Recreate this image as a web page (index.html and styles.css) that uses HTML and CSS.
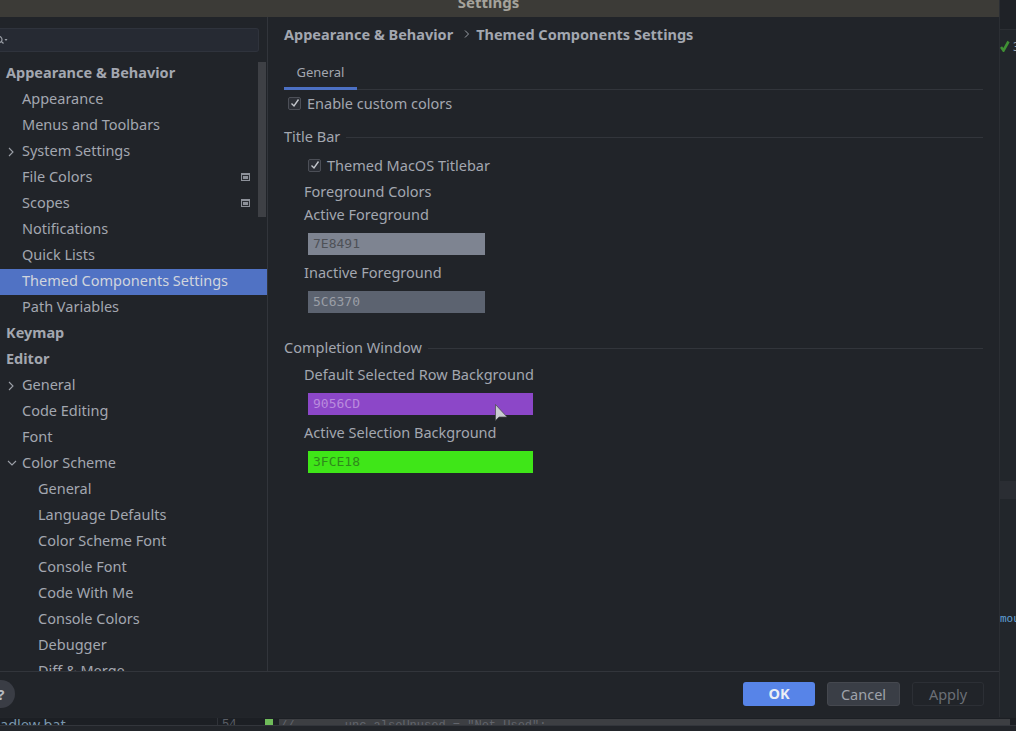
FILE: index.html
```html
<!DOCTYPE html>
<html lang="en">
<head>
<meta charset="UTF-8">
<meta name="viewport" content="width=device-width, initial-scale=1.0">
<title>Settings</title>
<link rel="stylesheet" href="styles.css">
</head>
<body>
<div class="screen">
<div class="upper">
<div class="dialog">
<div class="titlebar"><span>Settings</span></div>
<div class="dialog-body">
<div class="sidebar">
<div class="search">
<svg class="search-icon" width="10" height="10" viewBox="0 0 10 10"><path d="M-1 1.5 A3 3 0 1 1 -1 7.5 M1.500 6.500 L3.500 8.500" fill="none" stroke="#9a9ea6" stroke-width="1.2"/><path d="M4.500 4h3l-1.500 2z" fill="#9a9ea6"/></svg>
</div>
<div class="tree-wrap">
<div class="tree">
<div class="row head">Appearance &amp; Behavior</div>
<div class="row lvl1">Appearance</div>
<div class="row lvl1">Menus and Toolbars</div>
<div class="row lvl1"><svg class="arrow" width="8" height="10" viewBox="0 0 8 10"><path d="M2 1l4 4-4 4" fill="none" stroke="#9ca0a8" stroke-width="1.1"/></svg>System Settings</div>
<div class="row lvl1">File Colors<svg class="proj" width="10" height="9" viewBox="0 0 10 9"><path d="M0 0h9v8H0z" fill="#8d9199"/><path d="M1 2h7v5H1z" fill="#2b2e33"/><path d="M2 3h5v3H2z" fill="#8d9199"/></svg></div>
<div class="row lvl1">Scopes<svg class="proj" width="10" height="9" viewBox="0 0 10 9"><path d="M0 0h9v8H0z" fill="#8d9199"/><path d="M1 2h7v5H1z" fill="#2b2e33"/><path d="M2 3h5v3H2z" fill="#8d9199"/></svg></div>
<div class="row lvl1">Notifications</div>
<div class="row lvl1">Quick Lists</div>
<div class="row lvl1 selected">Themed Components Settings</div>
<div class="row lvl1">Path Variables</div>
<div class="row head">Keymap</div>
<div class="row head">Editor</div>
<div class="row lvl1"><svg class="arrow" width="8" height="10" viewBox="0 0 8 10"><path d="M2 1l4 4-4 4" fill="none" stroke="#9ca0a8" stroke-width="1.1"/></svg>General</div>
<div class="row lvl1">Code Editing</div>
<div class="row lvl1">Font</div>
<div class="row lvl1"><svg class="arrow" width="10" height="8" viewBox="0 0 10 8"><path d="M1 2l4 4 4-4" fill="none" stroke="#9ca0a8" stroke-width="1.1"/></svg>Color Scheme</div>
<div class="row lvl2">General</div>
<div class="row lvl2">Language Defaults</div>
<div class="row lvl2">Color Scheme Font</div>
<div class="row lvl2">Console Font</div>
<div class="row lvl2">Code With Me</div>
<div class="row lvl2">Console Colors</div>
<div class="row lvl2">Debugger</div>
<div class="row lvl2">Diff &amp; Merge</div>
</div>
<div class="scrollbar"></div>
</div>
</div>
<div class="content">
<div class="crumbs"><span>Appearance &amp; Behavior</span><svg width="6" height="8" viewBox="0 0 6 8"><path d="M1 0.500l3.500 3.500-3.500 3.500" fill="none" stroke="#9ca0a8"/></svg><span>Themed Components Settings</span></div>
<div class="tabs"><div class="tab">General</div></div>
<div class="check-row top"><span class="check"><svg width="10" height="10" viewBox="0 0 10 10"><path d="M1.500 5.500l2.500 2.500 4.500-6.500" fill="none" stroke="#c3c6cc" stroke-width="1.4"/></svg></span>Enable custom colors</div>
<div class="group-title first"><span>Title Bar</span></div>
<div class="group">
<div class="check-row inner"><span class="check"><svg width="10" height="10" viewBox="0 0 10 10"><path d="M1.500 5.500l2.500 2.500 4.500-6.500" fill="none" stroke="#c3c6cc" stroke-width="1.4"/></svg></span>Themed MacOS Titlebar</div>
<div class="label sub">Foreground Colors</div>
<div class="label tight">Active Foreground</div>
<div class="swatch short fg-active">7E8491</div>
<div class="label">Inactive Foreground</div>
<div class="swatch short fg-inactive">5C6370</div>
</div>
<div class="group-title second"><span>Completion Window</span></div>
<div class="group">
<div class="label default-row">Default Selected Row Background</div>
<div class="swatch long bg-selected">9056CD</div>
<div class="label">Active Selection Background</div>
<div class="swatch long bg-active">3FCE18</div>
<svg class="cursor" width="13" height="18" viewBox="0 0 13 18"><path d="M0.500 0.500v16l3.500-3.500 8 0z" fill="#c9ccd1" stroke="#45474b" stroke-width="0.7"/></svg>
</div>
</div>
</div>
<div class="footer">
<div class="help">?</div>
<div class="btn ok">OK</div>
<div class="btn cancel">Cancel</div>
<div class="btn apply">Apply</div>
</div>
</div>
<div class="editor-side">
<div class="side-top"></div>
<div class="side-note"><svg width="10" height="12" viewBox="0 0 10 12"><path d="M1 7l2.500 3.500 5-9" fill="none" stroke="#3f8f34" stroke-width="2.600"/></svg><span>3</span></div>
<div class="side-mark"></div>
<div class="side-word">mou</div>
</div>
</div>
<div class="lower">
<div class="strip">
<div class="file">adlew.bat</div>
<div class="gutter">54</div>
<div class="change"></div>
<div class="code">//&nbsp;&nbsp;&nbsp;&nbsp;&nbsp;&nbsp;&nbsp;unc.alsoUnused = "Not Used";</div>
</div>
</div>
</div>
</body>
</html>
```

FILE: styles.css
```css
* {
box-sizing: border-box;
}
html, body {
margin: 0;
height: 100%;
overflow: hidden;
background-color: #22252a;
}
body {
font-family: "Noto Sans", sans-serif;
font-size: 14.5px;
color: #a3a7b0;
}
.screen {
width: 1016px;
height: 731px;
display: flex;
flex-direction: column;
overflow: hidden;
}
.upper {
display: flex;
height: 717px;
flex: none;
}
.dialog {
width: 999px;
flex: none;
display: flex;
flex-direction: column;
background-color: #212429;
}
.titlebar {
height: 17px;
flex: none;
background-color: #3c3b37;
padding-right: 22px;
text-align: center;
overflow: hidden;
}
.titlebar span {
display: block;
margin-top: -7px;
font-weight: bold;
font-size: 15px;
line-height: 18px;
color: #a5a39c;
}
.dialog-body {
flex: 1;
display: flex;
min-height: 0;
}
.sidebar {
width: 268px;
flex: none;
border-right: 1px solid #32353b;
display: flex;
flex-direction: column;
}
.search {
width: 259px;
height: 24px;
margin-top: 11px;
background-color: #262a33;
border: 1px solid #2f333c;
border-left: none;
border-radius: 0 3px 3px 0;
flex: none;
}
.search-icon {
display: block;
margin-top: 6px;
}
.tree-wrap {
flex: 1;
display: flex;
min-height: 0;
overflow: hidden;
margin-top: 9px;
position: relative;
}
.tree {
flex: 1;
}
.scrollbar {
position: absolute;
right: 1px;
top: 1px;
width: 8px;
height: 155px;
background-color: #3e4045;
}
.row {
height: 26px;
padding-bottom: 4px;
line-height: 22px;
display: flex;
align-items: center;
position: relative;
white-space: nowrap;
}
.head {
padding-left: 6px;
font-weight: bold;
}
.lvl1 {
padding-left: 22px;
}
.lvl2 {
padding-left: 38px;
}
.selected {
background-color: #5072c4;
color: #d0d5dd;
}
.arrow {
position: absolute;
left: 7px;
top: 8px;
}
.proj {
position: absolute;
left: 241px;
top: 8px;
}
.content {
flex: 1;
padding: 0 16px;
min-width: 0;
}
.crumbs {
display: flex;
align-items: center;
height: 34px;
font-weight: bold;
}
.crumbs svg {
margin: 0 6px 0 11px;
}
.tabs {
margin-top: 12px;
height: 27px;
border-bottom: 1px solid #32353b;
}
.tab {
width: 73px;
height: 27px;
text-align: center;
font-size: 13px;
line-height: 18px;
border-bottom: 3px solid #4c70c4;
}
.check-row {
display: flex;
align-items: center;
height: 20px;
}
.check {
width: 13px;
height: 13px;
border: 1px solid #4c4f57;
border-radius: 2px;
background-color: #2b2e35;
display: flex;
align-items: center;
justify-content: center;
margin-right: 6px;
}
.check-row.top {
margin-top: 3px;
padding-left: 4px;
}
.group-title {
display: flex;
align-items: center;
gap: 6px;
height: 20px;
}
.group-title::after {
content: "";
flex: 1;
height: 1px;
margin-top: 2px;
background-color: #32353b;
}
.group-title.first {
margin-top: 13px;
}
.group-title.second {
margin-top: 24px;
}
.group {
padding-left: 20px;
position: relative;
}
.check-row.inner {
margin-top: 9px;
padding-left: 4px;
}
.label {
height: 20px;
line-height: 18px;
}
.label.sub {
margin-top: 7px;
}
.label.tight {
margin-top: 3px;
}
.label.default-row {
margin-top: 8px;
}
.swatch {
height: 22px;
line-height: 22px;
margin: 8px 0 8px 4px;
padding-left: 5px;
font-family: "DejaVu Sans Mono", monospace;
font-size: 13px;
}
.swatch.short {
width: 177px;
}
.swatch.long {
width: 225px;
}
.fg-active {
background-color: #7e8491;
color: #4e5157;
}
.fg-inactive {
background-color: #5c6370;
color: #9a9ea6;
}
.bg-selected {
background-color: #8c47c8;
color: #b98bdd;
}
.bg-active {
background-color: #3fe618;
color: #2f8a1c;
}
.cursor {
position: absolute;
left: 211px;
top: 39px;
}
.footer {
height: 46px;
flex: none;
display: flex;
align-items: center;
border-top: 1px solid #32353b;
padding: 0 15px 2px 0;
}
.help {
width: 28px;
height: 28px;
border-radius: 50%;
background-color: #3a3d45;
color: #b6b9c0;
margin-left: -13px;
font-weight: bold;
text-align: center;
line-height: 28px;
margin-right: auto;
}
.btn {
width: 72px;
height: 24px;
line-height: 22px;
text-align: center;
border-radius: 3px;
margin-left: 12px;
}
.ok {
background-color: #5784e8;
color: #eaeef5;
font-weight: bold;
}
.cancel {
width: 73px;
background-color: #3a3e46;
border: 1px solid #45484f;
color: #9fa3ab;
}
.apply {
background-color: #212429;
border: 1px solid #2c2f35;
color: #6b6f76;
}
.editor-side {
flex: 1;
min-width: 0;
background-color: #22262b;
border-left: 1px solid #2b2e33;
overflow: hidden;
}
.side-top {
height: 30px;
background-color: #1f2227;
border-bottom: 1px solid #2b2e33;
}
.side-note {
display: flex;
align-items: center;
gap: 3px;
margin-top: 9px;
font-size: 12px;
color: #a3a7b0;
height: 14px;
}
.side-note svg {
flex: none;
}
.side-mark {
height: 18px;
margin-top: 428px;
background-color: #2a2d33;
}
.side-word {
margin-top: 111px;
font-family: "DejaVu Sans Mono", monospace;
font-size: 11px;
line-height: 17px;
white-space: nowrap;
color: #5f9fd6;
}
.lower {
height: 14px;
flex: none;
padding-top: 1px;
}
.strip {
height: 8px;
display: flex;
overflow: hidden;
background-color: #1c1f24;
border-bottom: 1px solid #33363c;
}
.file {
width: 217px;
flex: none;
color: #7a97ad;
line-height: 12px;
}
.gutter {
width: 48px;
flex: none;
border-left: 1px solid #2f3238;
padding-left: 4px;
font-family: "Liberation Mono", monospace;
font-size: 12px;
line-height: 14px;
color: #5a5e66;
}
.change {
width: 8px;
height: 6px;
margin-top: 1px;
flex: none;
background-color: #6fbb5a;
}
.code {
flex: 1;
margin: 1px 6px 0 6px;
padding-left: 1px;
background-color: #3d3f43;
font-family: "Liberation Mono", monospace;
font-size: 12px;
line-height: 14px;
color: #62656c;
white-space: nowrap;
}
```
